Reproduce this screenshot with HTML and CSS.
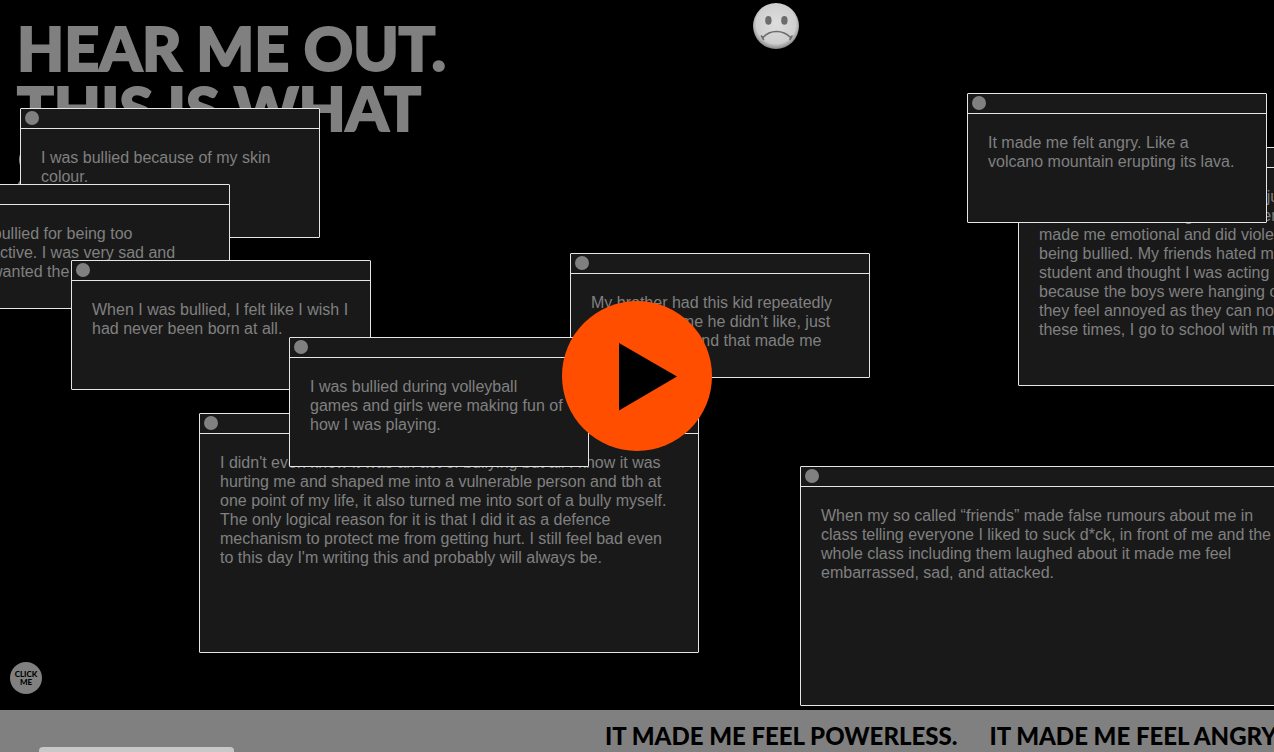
FILE: index.html
```html
<!DOCTYPE html>
<html lang="en">
<head>
<meta charset="utf-8">
<title>Hear me out</title>
<link rel="stylesheet" href="styles.css">
</head>
<body>
<main class="stage">
  <h1 class="headline">Hear me out.<br>This is what<br>S</h1>

  <svg class="sad-face" viewBox="0 0 46 46" role="img" aria-label="Sad face">
    <defs>
      <radialGradient id="skin" cx="50%" cy="45%" r="54%">
        <stop offset="0" stop-color="#dedede"/>
        <stop offset="0.8" stop-color="#cfcfcf"/>
        <stop offset="1" stop-color="#8c8c8c"/>
      </radialGradient>
    </defs>
    <circle cx="23" cy="23" r="23" fill="url(#skin)"/>
    <ellipse cx="15.400" cy="17.400" rx="3.200" ry="4.300" fill="#6c6c6c"/>
    <ellipse cx="31.400" cy="17.400" rx="3.200" ry="4.300" fill="#6c6c6c"/>
    <path d="M10 34.500C17 26.500 30 26.500 37.500 34.500M8.500 33L10.500 36.500M39 33L37 36.500" fill="none" stroke="#6c6c6c" stroke-width="1.600" stroke-linecap="round"/>
  </svg>

  <article class="note note-skin">
    <header class="note-bar"><span class="note-dot"></span></header>
    <p class="note-text">I was bullied because of my skin<br>colour.</p>
  </article>
  <article class="note note-active">
    <header class="note-bar"><span class="note-dot"></span></header>
    <p class="note-text">I was bullied for being too<br>hyperactive. I was very sad and<br>and I wanted the</p>
  </article>
  <article class="note note-born">
    <header class="note-bar"><span class="note-dot"></span></header>
    <p class="note-text">When I was bullied, I felt like I wish I<br>had never been born at all.</p>
  </article>
  <article class="note note-myself">
    <header class="note-bar"><span class="note-dot"></span></header>
    <p class="note-text">I didn't even know it was an act of bullying but all I know it was<br>hurting me and shaped me into a vulnerable person and tbh at<br>one point of my life, it also turned me into sort of a bully myself.<br>The only logical reason for it is that I did it as a defence<br>mechanism to protect me from getting hurt. I still feel bad even<br>to this day I'm writing this and probably will always be.</p>
  </article>
  <article class="note note-brother">
    <header class="note-bar"><span class="note-dot"></span></header>
    <p class="note-text">My brother had this kid repeatedly<br>call him a name he didn’t like, just<br>for the laughs and that made me</p>
  </article>
  <article class="note note-volleyball">
    <header class="note-bar"><span class="note-dot"></span></header>
    <p class="note-text">I was bullied during volleyball<br>games and girls were making fun of<br>how I was playing.</p>
  </article>
  <article class="note note-emotional">
    <header class="note-bar"><span class="note-dot"></span></header>
    <p class="note-text">I was bullied at school so it was just<br>Then each time doing when other<br>made me emotional and did violent<br>being bullied. My friends hated me<br>student and thought I was acting<br>because the boys were hanging out<br>they feel annoyed as they can not<br>these times, I go to school with my</p>
  </article>
  <article class="note note-volcano">
    <header class="note-bar"><span class="note-dot"></span></header>
    <p class="note-text">It made me felt angry. Like a<br>volcano mountain erupting its lava.</p>
  </article>
  <article class="note note-rumours">
    <header class="note-bar"><span class="note-dot"></span></header>
    <p class="note-text">When my so called “friends” made false rumours about me in<br>class telling everyone I liked to suck d*ck, in front of me and the<br>whole class including them laughed about it made me feel<br>embarrassed, sad, and attacked.</p>
  </article>

  <button class="click-me" type="button">Click<br>me</button>
  <button class="play" type="button" aria-label="Play">
    <svg class="play-icon" viewBox="0 0 150 150" aria-hidden="true"><path d="M57 42v67.500l58-34z"/></svg>
  </button>
</main>
<footer class="ticker">
  <span>It made me feel powerless.</span>
  <span>It made me feel angry.</span>
  <div class="ticker-tab"></div>
</footer>
</body>
</html>
```
FILE: styles.css
```css
* { box-sizing: border-box; }

body {
  margin: 0;
  min-height: 100vh;
  display: flex;
  flex-direction: column;
  overflow: hidden;
  background: #000;
  color: #808080;
  font-family: "Liberation Sans", Arial, sans-serif;
}

.stage {
  position: relative;
  flex: 1;
  overflow: hidden;
}

.headline {
  margin: 0;
  padding: 18px 17px;
  font: 900 61px/60px Lato, sans-serif;
  -webkit-text-stroke: 2px #808080;
  text-transform: uppercase;
}

.sad-face {
  position: absolute;
  left: 753px;
  top: 3px;
  width: 46px;
  height: 46px;
}

/* Floating message windows */
.note {
  position: absolute;
  width: 300px;
  min-height: 130px;
  border: 1px solid #e6e6e6;
  border-radius: 1px;
  background: #191919;
}

.note-bar {
  display: flex;
  align-items: center;
  height: 20px;
  padding: 0 4px 1px;
  border-bottom: 1px solid #e6e6e6;
}

.note-dot {
  width: 14px;
  height: 14px;
  border-radius: 50%;
  background: #808080;
}

.note-text {
  margin: 0;
  padding: 19px 20px;
  font-size: 16px;
  line-height: 19px;
  white-space: nowrap;
}

.note-skin { left: 20px; top: 108px; }
.note-active { left: -70px; top: 184px; min-height: 125px; }
.note-born { left: 71px; top: 260px; }
.note-myself { left: 199px; top: 413px; width: 500px; min-height: 240px; }
.note-brother { left: 570px; top: 253px; min-height: 125px; }
.note-volleyball { left: 289px; top: 337px; }
.note-emotional { left: 1018px; top: 147px; width: 500px; min-height: 239px; }
.note-volcano { left: 967px; top: 93px; }
.note-rumours { left: 800px; top: 466px; width: 500px; min-height: 240px; }

button {
  border: 0;
  padding: 0;
  border-radius: 50%;
  cursor: pointer;
}

.click-me {
  position: absolute;
  left: 10px;
  bottom: 16px;
  width: 32px;
  height: 32px;
  background: #808080;
  color: #000;
  font: 900 8px/8px Lato, sans-serif;
  text-transform: uppercase;
}

.play {
  position: absolute;
  left: 562px;
  top: 301px;
  width: 150px;
  height: 150px;
  background: #ff4e00;
}

.play-icon {
  display: block;
  width: 100%;
}

.ticker {
  position: relative;
  display: flex;
  gap: 32px;
  height: 42px;
  padding: 10px 0 0 605px;
  overflow: hidden;
  background: #808080;
  color: #000;
  font: 900 24px/32px Lato, sans-serif;
  text-transform: uppercase;
  white-space: nowrap;
}

.ticker-tab {
  position: absolute;
  left: 39px;
  bottom: 0;
  width: 195px;
  height: 5px;
  border-radius: 4px 4px 0 0;
  background: #c8c8c8;
}
```
